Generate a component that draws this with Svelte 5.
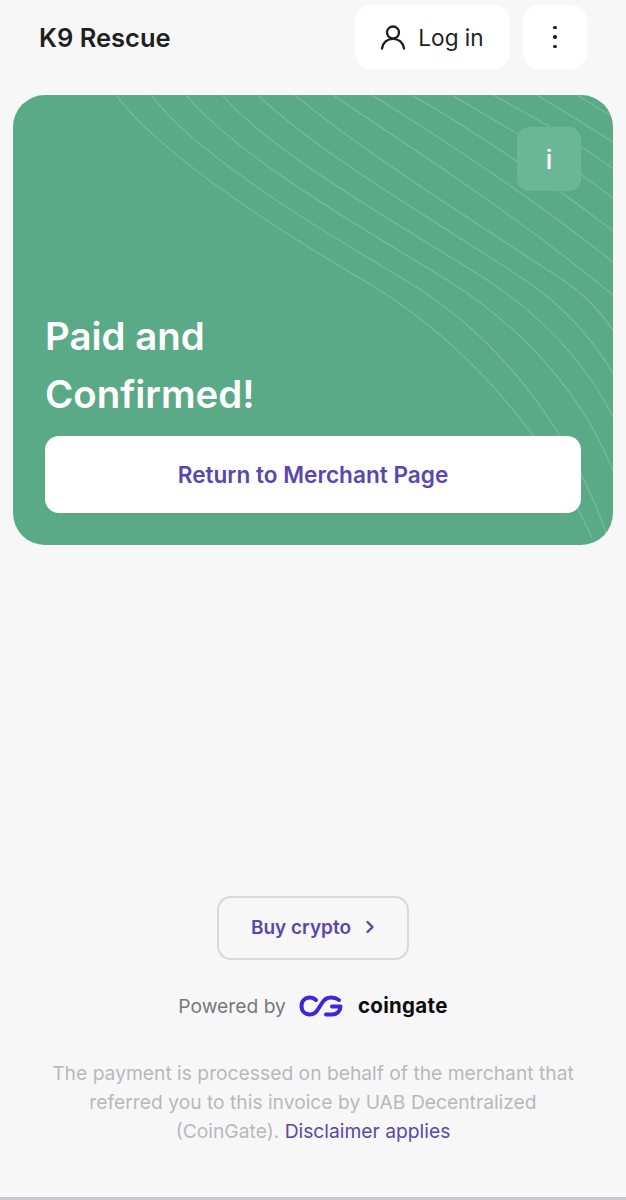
<script>
  // wave lines on the status card, in page coordinates (the svg viewBox starts at the card's corner)
  const wavePaths = [
    'M116 95C165 160 295 240 363 280C440 325 535 410 592 538',
    'M151 95C200 160 335 238 405 280C490 331 570 420 612 550',
    'M186 95C240 160 375 235 447 280C525 329 590 400 620 490',
    'M222 95C280 160 410 230 487 280C545 318 600 375 625 445',
    'M258 95C320 155 450 230 525 280C565 307 600 345 625 395',
    'M295 95C360 150 490 232 563 280C590 298 610 322 625 350',
    'M333 95C430 160 530 225 625 305',
    'M372 95C460 150 550 210 625 272',
    'M412 95C490 140 560 190 625 240',
    'M452 95C520 135 580 170 625 208',
    'M493 95C540 120 590 150 625 178',
    'M537 95C565 112 595 130 625 150',
    'M577 95C590 103 610 115 625 125'
  ]
</script>

<div class="page">
  <header>
    <span class="brand">K9 Rescue</span>
    <div class="actions">
      <button class="login">
        <svg width="28" height="28" viewBox="0 0 28 28" fill="none" stroke="#1f1f1f" stroke-width="2.3" stroke-linecap="round">
          <circle cx="14" cy="9.5" r="6" />
          <path d="M3 25.500c.8-5.800 5.300-9.700 11-9.700s10.200 3.900 11 9.700" />
        </svg>
        Log in
      </button>
      <button class="more" aria-label="More">
        <span></span><span></span><span></span>
      </button>
    </div>
  </header>

  <section class="status">
    <svg class="waves" viewBox="13 95 600 450" width="600" height="450" fill="none" stroke="#fff" stroke-opacity="0.2" stroke-width="1.1">
      {#each wavePaths as d}
        <path {d} />
      {/each}
    </svg>
    <div class="info-row">
      <button class="info">i</button>
    </div>
    <h1>Paid and<br />Confirmed!</h1>
    <button class="return">Return to Merchant Page</button>
  </section>

  <footer>
    <button class="buy">
      Buy crypto
      <svg width="10" height="14" viewBox="0 0 10 14" fill="none" stroke="#5847ae" stroke-width="2.4" stroke-linecap="round" stroke-linejoin="round">
        <path d="M2.500 2l5 5-5 5" />
      </svg>
    </button>
    <div class="powered">
      <span>Powered by</span>
      <svg class="logo" width="44" height="22" viewBox="0 0 44 22" fill="none" stroke="#3d27d6" stroke-width="4" stroke-linecap="round" stroke-linejoin="round">
        <path d="M17 5C15 3 13 2.500 11 2.500C6 2.500 2.500 6 2.500 11C2.500 16 6 19.500 11 19.500C15 19.500 17.500 17 19.500 13.500L23 8C25.500 4 28 2.500 32 2.500C35.500 2.500 38 3.500 40 5" />
        <path d="M27 19.500H33C38 19.500 41.500 16 41.500 11.500H33" />
      </svg>
      <span class="wordmark">coingate</span>
    </div>
    <p class="legal">
      The payment is processed on behalf of the merchant that referred you to this invoice by UAB Decentralized (CoinGate).
      <a href="#disclaimer">Disclaimer applies</a>
    </p>
  </footer>

  <div class="edge"></div>
</div>

<style>
  :global(body) {
    background: #f7f7f7;
    font-family: Inter, "Liberation Sans", sans-serif;
  }

  button {
    font-family: inherit;
    border: 0;
    cursor: pointer;
  }

  .page {
    min-height: 1200px;
    display: flex;
    flex-direction: column;
  }

  header {
    display: flex;
    align-items: center;
    justify-content: space-between;
    padding: 5px 39px 0;
  }

  .brand {
    font-size: 25.5px;
    font-weight: 600;
    color: #1f1f1f;
  }

  .actions {
    display: flex;
    gap: 13px;
  }

  .login {
    width: 155px;
    height: 64px;
    display: flex;
    align-items: center;
    justify-content: center;
    gap: 11px;
    padding-left: 4px;
    background: #fff;
    border-radius: 16px;
    font-size: 22.6px;
    color: #1f1f1f;
  }

  .more {
    width: 64px;
    height: 64px;
    display: flex;
    flex-direction: column;
    align-items: center;
    justify-content: center;
    gap: 6px;
    background: #fff;
    border-radius: 16px;
  }

  .more span {
    width: 3.5px;
    height: 3.5px;
    border-radius: 50%;
    background: #1f1f1f;
  }

  .status {
    position: relative;
    overflow: hidden;
    margin: 26px 13px 0;
    height: 450px;
    box-sizing: border-box;
    padding: 32px;
    display: flex;
    flex-direction: column;
    background: #5aaa87;
    border-radius: 32px;
    color: #fff;
  }

  .waves {
    position: absolute;
    inset: 0;
  }

  .info-row {
    position: relative;
    display: flex;
    justify-content: flex-end;
  }

  .info {
    width: 64px;
    height: 64px;
    background: #6cb698;
    border-radius: 12px;
    color: #fff;
    font-size: 26px;
    font-weight: 500;
  }

  h1 {
    position: relative;
    margin: auto 0 13px;
    font-size: 38.4px;
    line-height: 58px;
    font-weight: 600;
  }

  .return {
    position: relative;
    flex: none;
    height: 77px;
    padding-bottom: 2px;
    background: #fff;
    border-radius: 14px;
    color: #5847ae;
    font-size: 22.6px;
    font-weight: 600;
  }

  footer {
    margin-top: auto;
    display: flex;
    flex-direction: column;
    align-items: center;
  }

  .buy {
    width: 192px;
    height: 64px;
    display: flex;
    align-items: center;
    justify-content: center;
    gap: 14px;
    padding-bottom: 3px;
    background: transparent;
    border: 2px solid #d9d9d9;
    border-radius: 14px;
    color: #5847ae;
    font-size: 19px;
    font-weight: 600;
  }

  .powered {
    display: flex;
    align-items: center;
    height: 25px;
    margin-top: 33px;
    color: #77777f;
    font-size: 19.25px;
  }

  .logo {
    margin-left: 13px;
  }

  .wordmark {
    margin-left: 15px;
    color: #0c0c0c;
    font-size: 20.5px;
    font-weight: 700;
    letter-spacing: 0.3px;
  }

  .legal {
    width: 530px;
    margin: 41px 0 0;
    text-align: center;
    font-size: 19.25px;
    line-height: 29px;
    color: #b8b8bd;
  }

  .legal a {
    color: #5847ae;
    text-decoration: none;
  }

  .edge {
    height: 4px;
    margin-top: 50px;
    background: linear-gradient(#fbfbfb 0 1px, #c9c6dc 1px);
  }
</style>
